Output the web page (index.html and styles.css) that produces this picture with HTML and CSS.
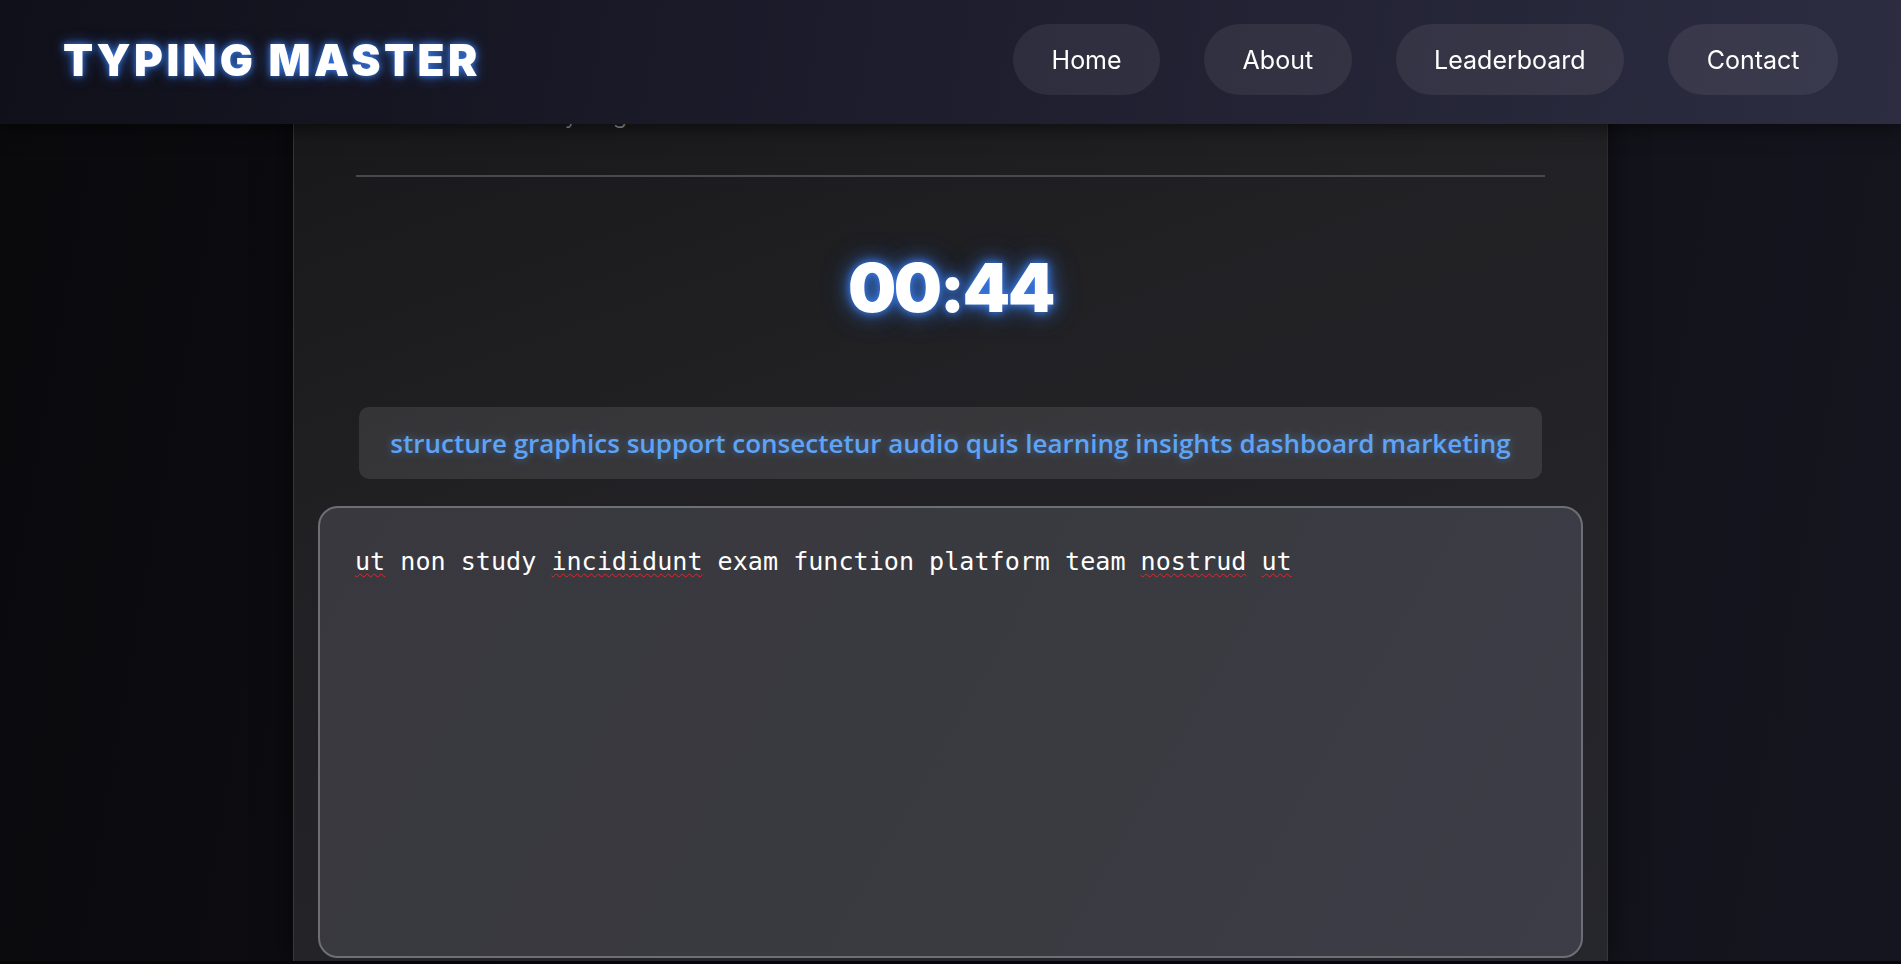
FILE: index.html
```html
<!DOCTYPE html>
<html lang="en">
<head>
<meta charset="utf-8">
<title>Typing Master</title>
<link rel="stylesheet" href="styles.css">
</head>
<body>
<header class="site-header">
  <div class="logo">TYPING MASTER</div>
  <nav class="nav">
    <a class="nav-link" href="#">Home</a>
    <a class="nav-link" href="#">About</a>
    <a class="nav-link" href="#">Leaderboard</a>
    <a class="nav-link" href="#">Contact</a>
  </nav>
</header>
<main class="page">
  <section class="card">
    <div class="intro">
      <p class="subtitle">Ready to go?</p>
    </div>
    <div class="timer">00:44</div>
    <div class="words">structure graphics support consectetur audio quis learning insights dashboard marketing</div>
    <div class="type-input" contenteditable="true" spellcheck="true"><span class="misspelt">ut</span> non study <span class="misspelt">incididunt</span> exam function platform team <span class="misspelt">nostrud</span> <span class="misspelt">ut</span></div>
  </section>
</main>
</body>
</html>
```
FILE: styles.css
```css
* { box-sizing: border-box; }
html { background: #060608; }
body {
  margin: 0;
  font-family: "Inter", "Noto Sans", sans-serif;
  color: #fff;
  background: linear-gradient(100deg, #0a0a0d 0%, #101016 50%, #15151f 100%);
}
.site-header {
  position: fixed;
  top: 0; left: 0; right: 0;
  height: 124px;
  z-index: 10;
  display: flex;
  align-items: center;
  justify-content: space-between;
  padding: 0 63px 5px;
  background: linear-gradient(100deg, #10101a 0%, #1c1c2c 45%, #2d2d42 100%);
  box-shadow: 0 4px 18px rgba(0,0,0,0.55);
}
.logo {
  font-family: "Inter", sans-serif;
  font-weight: 900;
  font-size: 44px;
  letter-spacing: 3.4px;
  color: #fff;
  text-shadow: 0 0 6px rgba(59,130,246,0.9), 0 0 14px rgba(59,130,246,0.6);
}
.nav { display: flex; gap: 44px; }
.nav-link {
  display: flex;
  align-items: center;
  height: 71px;
  padding: 0 38.5px;
  border-radius: 36px;
  background: rgba(255,255,255,0.07);
  color: #fff;
  text-decoration: none;
  font-size: 25px;
  font-weight: 400;
}
.page { padding: 0; }
.card {
  width: 1315px;
  margin: 0 auto;
  padding: 99px 24px 3px;
  border: 1px solid rgba(255,255,255,0.09);
  border-bottom: none;
  background: linear-gradient(160deg, #161618 0%, #212124 40%, #26262d 100%);
  box-shadow: 0 0 30px rgba(0,0,0,0.6);
}
.intro {
  margin: 0 38px;
  border-bottom: 2px solid #48484d;
  padding-bottom: 45px;
}
.subtitle {
  margin: 0;
  padding-left: 152px;
  font-size: 24px;
  line-height: 30px;
  font-weight: 300;
  color: #9d9da3;
}
.timer {
  margin-top: 75px;
  text-align: center;
  font-family: "Inter", sans-serif;
  font-weight: 900;
  font-size: 68px;
  line-height: 70px;
  letter-spacing: -2.5px;
  color: #fff;
  text-shadow: 0 0 8px rgba(59,130,246,1), 0 0 18px rgba(59,130,246,0.7), 0 0 30px rgba(59,130,246,0.35);
}
.words {
  width: fit-content;
  margin: 85px auto 0;
  padding: 18px 31px;
  border-radius: 10px;
  background: rgba(255,255,255,0.1);
  font-family: "Open Sans", "Noto Sans", sans-serif;
  font-weight: 600;
  font-size: 26px;
  line-height: 36px;
  color: #5ea3f5;
  text-shadow: 0 0 8px rgba(96,165,250,0.45);
  white-space: nowrap;
}
.type-input {
  margin-top: 27px;
  height: 452px;
  padding: 35px 35px;
  border: 2px solid #6e6e75;
  border-radius: 20px;
  background: linear-gradient(120deg, #38383e 0%, #3a3a41 60%, #3d3d48 100%);
  font-family: "DejaVu Sans Mono", monospace;
  font-size: 25.1px;
  line-height: 37.5px;
  color: #fff;
  outline: none;
}
.misspelt {
  text-decoration: underline wavy #e0262f;
  text-decoration-thickness: 1px;
  text-underline-offset: 3px;
}
```
